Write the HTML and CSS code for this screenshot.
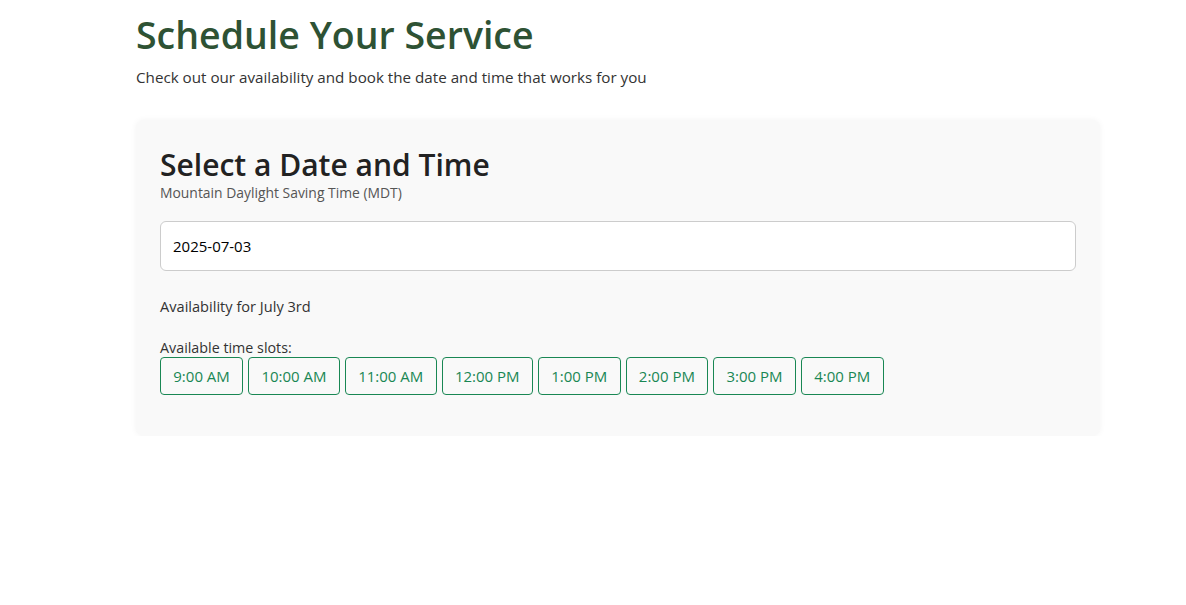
FILE: index.html
```html
<!DOCTYPE html>
<html lang="en">
<head>
<meta charset="utf-8">
<title>Schedule Your Service</title>
<link rel="stylesheet" href="styles.css">
</head>
<body>
<main class="page">
  <header class="intro">
    <h1 class="title">Schedule Your Service</h1>
    <p class="lead">Check out our availability and book the date and time that works for you</p>
  </header>
  <section class="card">
    <h2 class="card-title">Select a Date and Time</h2>
    <div class="tz">Mountain Daylight Saving Time (MDT)</div>
    <div class="date-field">2025-07-03</div>
    <p class="avail">Availability for July 3rd</p>
    <div class="slots-label">Available time slots:</div>
    <div class="slots">
      <button class="slot">9:00 AM</button>
      <button class="slot">10:00 AM</button>
      <button class="slot">11:00 AM</button>
      <button class="slot">12:00 PM</button>
      <button class="slot">1:00 PM</button>
      <button class="slot">2:00 PM</button>
      <button class="slot">3:00 PM</button>
      <button class="slot">4:00 PM</button>
    </div>
  </section>
</main>
</body>
</html>
```
FILE: styles.css
```css
* { box-sizing: border-box; }
body {
  margin: 0;
  background: #fff;
  font-family: "Open Sans", "Noto Sans", sans-serif;
  color: #333;
}
.page {
  width: 964px;
  margin-left: 136px;
}
.intro { padding-top: 12px; }
.title {
  margin: 0;
  font-size: 37.5px;
  line-height: 46px;
  font-weight: 600;
  color: #2e5234;
}
.lead {
  margin: 8px 0 0;
  font-size: 15.2px;
  line-height: 22px;
  color: #333;
}
.card {
  margin-top: 32px;
  background: #f9f9f9;
  border-radius: 8px;
  box-shadow: 0 0 6px rgba(0,0,0,0.05);
  padding: 26px 24px 41px;
}
.card-title {
  margin: 0;
  font-size: 30px;
  line-height: 38px;
  font-weight: 600;
  color: #222;
}
.tz {
  font-size: 13.9px;
  line-height: 18px;
  color: #555;
}
.date-field {
  margin-top: 19px;
  height: 50px;
  background: #fff;
  border: 1px solid #ccc;
  border-radius: 6px;
  padding: 0 12px;
  display: flex;
  align-items: center;
  font-size: 15px;
  color: #000;
}
.avail {
  margin: 25px 0 0;
  font-size: 14.6px;
  line-height: 20px;
  color: #333;
}
.slots-label {
  margin-top: 23px;
  font-size: 14.3px;
  line-height: 18px;
  color: #333;
}
.slots {
  display: flex;
  gap: 5px;
  flex-wrap: wrap;
}
.slot {
  height: 38px;
  padding: 0 12.3px;
  background: transparent;
  border: 1px solid #198754;
  border-radius: 4px;
  color: #198754;
  font-family: inherit;
  font-size: 15px;
}
```
